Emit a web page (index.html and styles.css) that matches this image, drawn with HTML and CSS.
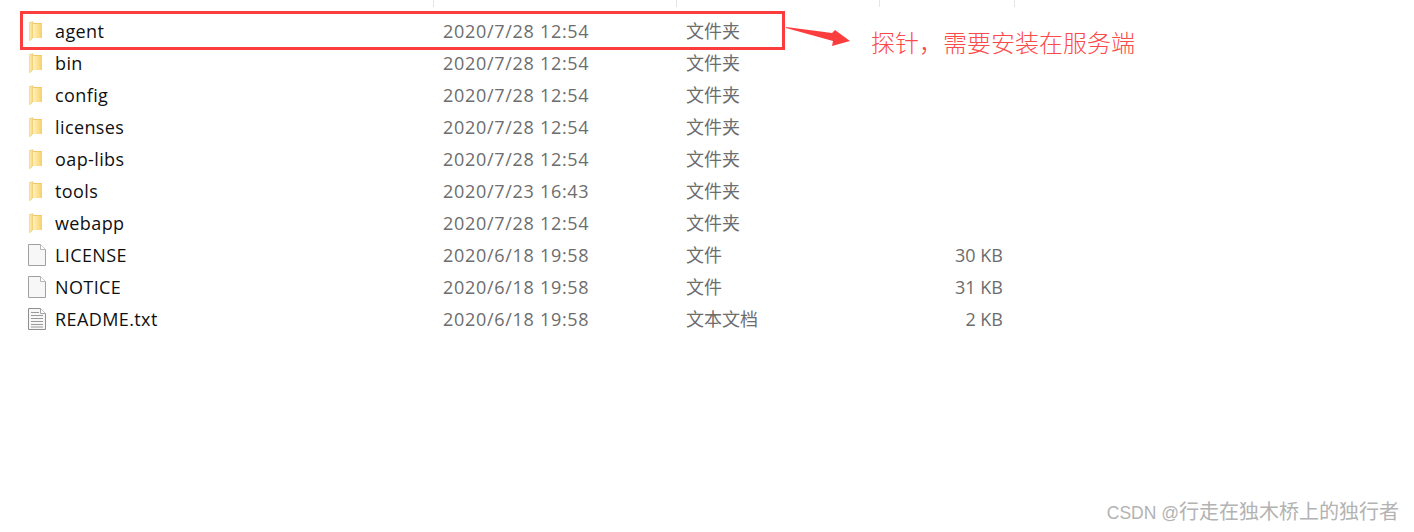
FILE: index.html
```html
<!DOCTYPE html>
<html lang="en">
<head>
    <meta charset="UTF-8">
    <title>apache-skywalking</title>
    <link rel="stylesheet" href="styles.css">
</head>
<body>
    <svg width="0" height="0" class="defs">
        <defs>
            <linearGradient id="folderFill" x1="0" y1="0" x2="1" y2="0">
                <stop offset="0" stop-color="#fff2b8"/>
                <stop offset="1" stop-color="#f8cf6c"/>
            </linearGradient>
            <symbol id="folder" viewBox="0 0 16 20">
                <path d="M2 1h3v1h9v15H5v-.5L2 20z" fill="#f2c867"/>
                <path d="M1.500 1.500 5 .8v15.700l-3.500 3z" fill="url(#folderFill)" stroke="#e8c987" stroke-width=".6"/>
                <path d="M5 3h9v14H5z" fill="url(#folderFill)"/>
            </symbol>
            <symbol id="file" viewBox="0 0 18 22">
                <path d="M.5.500h12l5 5v16H.500z" fill="#f7f7f7" stroke="#a0a0a0"/>
                <path d="M12.500.500v5h5" fill="#fff" stroke="#b5b5b5"/>
            </symbol>
            <symbol id="textfile" viewBox="0 0 18 22">
                <path d="M.5.500h12l5 5v16H.500z" fill="#f7f7f7" stroke="#8f8f8f"/>
                <path d="M12.500.500v5h5" fill="#fff" stroke="#a5a5a5"/>
                <path d="M3 4.500h8M3 7.500h12M3 10.500h12M3 13.500h12M3 16.500h12M3 19h12" stroke="#9a9a9a" fill="none"/>
            </symbol>
        </defs>
    </svg>

    <div class="col-heads">
        <span class="col-sep"></span>
        <span class="col-sep"></span>
        <span class="col-sep"></span>
        <span class="col-sep"></span>
    </div>

    <div class="file-list">
        <div class="row">
            <svg class="icon-folder"><use href="#folder"/></svg>
            <span class="name">agent</span><span class="date">2020/7/28 12:54</span><span class="type">文件夹</span><span class="size"></span>
        </div>
        <div class="row">
            <svg class="icon-folder"><use href="#folder"/></svg>
            <span class="name">bin</span><span class="date">2020/7/28 12:54</span><span class="type">文件夹</span><span class="size"></span>
        </div>
        <div class="row">
            <svg class="icon-folder"><use href="#folder"/></svg>
            <span class="name">config</span><span class="date">2020/7/28 12:54</span><span class="type">文件夹</span><span class="size"></span>
        </div>
        <div class="row">
            <svg class="icon-folder"><use href="#folder"/></svg>
            <span class="name">licenses</span><span class="date">2020/7/28 12:54</span><span class="type">文件夹</span><span class="size"></span>
        </div>
        <div class="row">
            <svg class="icon-folder"><use href="#folder"/></svg>
            <span class="name">oap-libs</span><span class="date">2020/7/28 12:54</span><span class="type">文件夹</span><span class="size"></span>
        </div>
        <div class="row">
            <svg class="icon-folder"><use href="#folder"/></svg>
            <span class="name">tools</span><span class="date">2020/7/23 16:43</span><span class="type">文件夹</span><span class="size"></span>
        </div>
        <div class="row">
            <svg class="icon-folder"><use href="#folder"/></svg>
            <span class="name">webapp</span><span class="date">2020/7/28 12:54</span><span class="type">文件夹</span><span class="size"></span>
        </div>
        <div class="row">
            <svg class="icon-file"><use href="#file"/></svg>
            <span class="name">LICENSE</span><span class="date">2020/6/18 19:58</span><span class="type">文件</span><span class="size">30 KB</span>
        </div>
        <div class="row">
            <svg class="icon-file"><use href="#file"/></svg>
            <span class="name">NOTICE</span><span class="date">2020/6/18 19:58</span><span class="type">文件</span><span class="size">31 KB</span>
        </div>
        <div class="row">
            <svg class="icon-file"><use href="#textfile"/></svg>
            <span class="name">README.txt</span><span class="date">2020/6/18 19:58</span><span class="type">文本文档</span><span class="size">2 KB</span>
        </div>
    </div>

    <!-- annotation drawn over the screenshot -->
    <div class="red-box"></div>
    <svg class="arrow" width="66" height="30" viewBox="0 0 66 30">
        <path d="M1 2 L47 8 L50 5 L65 16 L47 21 L48 16 L1 3 Z" fill="#fc3d3d"/>
    </svg>
    <div class="note">探针，需要安装在服务端</div>

    <div class="watermark"><span class="wm-latin">CSDN @</span>行走在独木桥上的独行者</div>
</body>
</html>
```

FILE: styles.css
```css
body {
    position: relative;
    height: 532px;
    margin: 0;
    overflow: hidden;
    background-color: #ffffff;
    font-family: "Open Sans", "Noto Sans CJK SC", sans-serif;
    font-size: 18px;
}

.defs {
    position: absolute;
}

.col-heads {
    display: grid;
    grid-template-columns: 243px 203px 135px 1px;
    height: 7px;
    margin-left: 433px;
    margin-bottom: 8px;
}

.col-sep {
    width: 1px;
    background-color: #e5e5e5;
}

.file-list {
    display: flex;
    flex-direction: column;
}

.row {
    display: flex;
    align-items: center;
    height: 32px;
    padding-left: 28px;
    line-height: 32px;
    white-space: nowrap;
}

.icon-folder {
    width: 16px;
    height: 20px;
    margin-right: 11px;
}

.icon-file {
    width: 18px;
    height: 22px;
    margin-right: 9px;
}

.name {
    width: 388px;
    color: #101010;
    letter-spacing: 0.4px;
}

.date {
    width: 243px;
    color: #6d6d6d;
    letter-spacing: 0.7px;
}

.type {
    width: 200px;
    color: #6d6d6d;
}

.size {
    width: 117px;
    color: #6d6d6d;
    text-align: right;
}

.red-box {
    position: absolute;
    left: 20px;
    top: 11px;
    width: 759px;
    height: 33px;
    border: 3px solid #fc3d3d;
}

.arrow {
    position: absolute;
    left: 785px;
    top: 25px;
}

.note {
    position: absolute;
    left: 871px;
    top: 24px;
    color: #fc4a4a;
    font-family: "Noto Sans CJK SC", serif;
    font-size: 24px;
    font-weight: 300;
    line-height: 36px;
    white-space: nowrap;
}

.watermark {
    position: absolute;
    right: 15px;
    top: 498px;
    color: #b3b3b3;
    font-family: "Liberation Sans", "Noto Sans CJK SC", sans-serif;
    font-size: 20px;
    line-height: 28px;
    white-space: nowrap;
}

.wm-latin {
    font-size: 17.500px;
}
```
